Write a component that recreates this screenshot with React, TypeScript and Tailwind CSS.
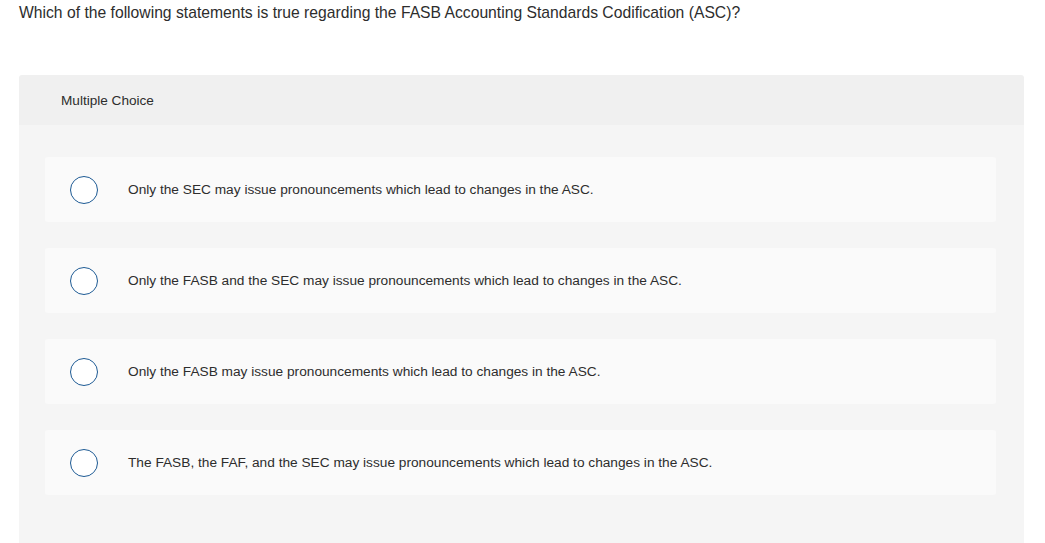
const options = [
  "Only the SEC may issue pronouncements which lead to changes in the ASC.",
  "Only the FASB and the SEC may issue pronouncements which lead to changes in the ASC.",
  "Only the FASB may issue pronouncements which lead to changes in the ASC.",
  "The FASB, the FAF, and the SEC may issue pronouncements which lead to changes in the ASC.",
];

export default function App() {
  return (
    <div className="bg-white min-h-[543px] font-['Liberation_Sans',Arial,sans-serif] text-[#333]">
      <div className="pl-[19px] pr-[21px] pt-[4px]">
        <p className="text-[15.7px] leading-[18px] text-[#2d2d2d]">
          Which of the following statements is true regarding the FASB Accounting Standards Codification (ASC)?
        </p>

        <div className="mt-[53px] rounded-t-[3px] overflow-hidden">
          <div className="bg-[#f0f0f0] h-[50px] flex items-center pl-[42px] pt-[2px] text-[13.6px] text-[#2d2d2d]">
            Multiple Choice
          </div>
          <div className="bg-[#f5f5f5] pt-[32px] pl-[26px] pr-[28px] pb-[60px] flex flex-col gap-[26px]">
            {options.map((text) => (
              <label
                key={text}
                className="bg-[#fafafa] rounded-[3px] h-[65px] flex items-center pl-[25px] cursor-pointer"
              >
                <span className="w-[28px] h-[28px] rounded-full border-[1.5px] border-[#1d5a94] bg-white shrink-0" />
                <span className="ml-[30px] pt-[2px] text-[13.7px] text-[#2d2d2d]">{text}</span>
              </label>
            ))}
          </div>
        </div>
      </div>
    </div>
  );
}
